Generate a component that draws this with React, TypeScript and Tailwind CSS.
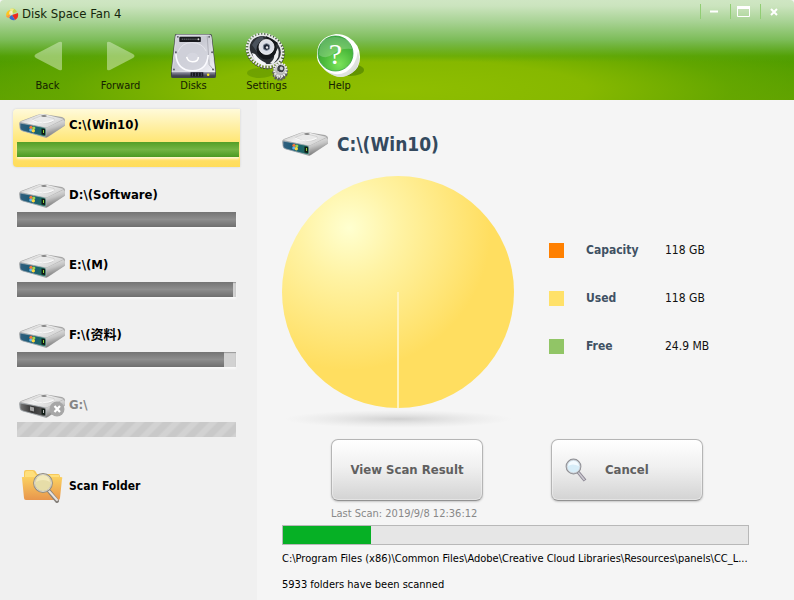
import React from "react";

type Drive = { letter: string; label: string; used: number; state: "active" | "idle" | "offline" };

const drives: Drive[] = [
  { letter: "C", label: "C:\\(Win10)", used: 100, state: "active" },
  { letter: "D", label: "D:\\(Software)", used: 100, state: "idle" },
  { letter: "E", label: "E:\\(M)", used: 98.6, state: "idle" },
  { letter: "F", label: "F:\\(资料)", used: 94.5, state: "idle" },
  { letter: "G", label: "G:\\", used: 0, state: "offline" },
];

const legend = [
  { name: "Capacity", value: "118 GB", swatch: "bg-[#ff8000]" },
  { name: "Used", value: "118 GB", swatch: "bg-[#ffe169]" },
  { name: "Free", value: "24.9 MB", swatch: "bg-[#91c566]" },
];

function Logo() {
  return (
    <svg viewBox="0 0 13 13" className="h-[13px] w-[13px]" aria-hidden="true">
      <path d="M5 6 L0 8 Q0 3 4 2Z" fill="#ffc61c" />
      <path d="M5 6 L4 1 Q9 -1 11 4Z" fill="#c5d84c" />
      <path d="M5 6 L4 1 Q6 0 8 1Z" fill="#f4e98a" />
      <path d="M6 7 L12 5 Q13 10 9 12Z" fill="#ee2a1e" />
      <path d="M6 7 L9 12 Q5 13 3 9Z" fill="#3a6bd0" />
      <path d="M5 6 L0 8 Q1 10 3 10Z" fill="#ff9a3a" />
      <circle cx="5" cy="5" r="2" fill="#fff" opacity=".55" />
    </svg>
  );
}

function ArrowIcon({ forward = false }: { forward?: boolean }) {
  return (
    <svg viewBox="0 0 28 30" className="h-[30px] w-[28px]" aria-hidden="true">
      <path
        d={forward ? "M0 2 Q0 0 3 1 L26 13 Q29 15 26 17 L3 29 Q0 30 0 28Z" : "M28 2 Q28 0 25 1 L2 13 Q-1 15 2 17 L25 29 Q28 30 28 28Z"}
        fill="#e2f2d2"
        opacity=".48"
      />
    </svg>
  );
}

function DisksIcon() {
  return (
    <svg viewBox="0 0 46 48" preserveAspectRatio="none" className="h-[46px] w-[45px]" aria-hidden="true">
      <defs>
        <linearGradient id="diskTop" x1="0" y1="0" x2="1" y2="1">
          <stop offset="0" stopColor="#d4d5dd" />
          <stop offset=".45" stopColor="#c9cad3" />
          <stop offset="1" stopColor="#f2f2f8" />
        </linearGradient>
        <linearGradient id="diskFront" x1="0" y1="0" x2="0" y2="1">
          <stop offset="0" stopColor="#8d8ea2" />
          <stop offset="1" stopColor="#3c3d4a" />
        </linearGradient>
      </defs>
      <path d="M4 2 Q4 1 6 1 H40 Q42 1 42 3 L46 40 V45 Q46 47 44 47 H2 Q0 47 0 45 V40Z" fill="#41464a" />
      <path d="M5 3 Q5 2 6 2 H39 Q41 2 41 4 L45 41 H1Z" fill="url(#diskTop)" stroke="#f7f7fa" strokeWidth=".7" />
      <path d="M37 3 L39 33 L44 39" fill="none" stroke="#a3a4ae" strokeWidth=".8" />
      <ellipse cx="21.500" cy="24.500" rx="16.500" ry="15" fill="#d0d1d9" opacity=".8" />
      <path d="M5 22 Q6 39 22 39.500 Q37 39 38 23" fill="none" stroke="#fbfbff" strokeWidth="1.600" />
      <path d="M7 20 Q11 10 21 10 Q32 10 36 19" fill="none" stroke="#e9e9ef" strokeWidth=".8" />
      <ellipse cx="22" cy="25" rx="6" ry="4.500" fill="#d5d6df" />
      <path d="M16 25 Q17 30 22 30 Q28 30 28 25" fill="none" stroke="#fff" strokeWidth="1.600" />
      <rect x="8.500" y="4" width="22" height="5.500" rx="1" fill="#191a1e" />
      <path d="M11 6.500 H26" stroke="#6b6e74" strokeWidth="1.500" strokeDasharray="1 1" />
      <circle cx="28" cy="6.500" r="1" fill="#d8d8d8" />
      <path d="M1 41 H45 V45 H1Z" fill="url(#diskFront)" />
      <rect x="20" y="41" width="13" height="4.500" fill="#191a20" />
      <path d="M22 41 V45 M25 41 V45 M28 41 V45 M31 41 V45" stroke="#46475a" />
      <circle cx="38" cy="43.500" r="1.300" fill="#ffe72a" />
      <g fill="#5c5e69">
        <circle cx="7" cy="4" r="1" /><circle cx="39" cy="4" r="1" />
        <circle cx="5" cy="20" r="1" /><circle cx="42" cy="20" r="1" />
        <circle cx="3" cy="38" r="1" /><circle cx="43" cy="38" r="1" />
      </g>
    </svg>
  );
}

function GearIcon() {
  return (
    <svg viewBox="0 0 46 50" className="h-[50px] w-[46px]" aria-hidden="true">
      <ellipse cx="16" cy="42" rx="13" ry="5" fill="#3d6f00" opacity=".3" />
      <g transform="rotate(30 21 19.500)">
        <ellipse cx="21.500" cy="20" rx="18.500" ry="15.500" fill="none" stroke="#3a3e42" strokeWidth="3.500" strokeDasharray="2.200 .8" />
        <ellipse cx="21" cy="19.500" rx="18.500" ry="15.500" fill="none" stroke="#ededed" strokeWidth="3" strokeDasharray="1.700 1.300" />
        <ellipse cx="21" cy="19" rx="17" ry="14" fill="#2b2f33" stroke="#e6e7e9" strokeWidth="1.600" />
      </g>
      <path d="M8 14 Q12 6 19 5 L20 11 Q14 13 13 21Z" fill="#4a525b" />
      <path d="M22 5 L34 12 L30 16 L24 12Z" fill="#141719" />
      <path d="M8 22 Q10 32 21 35 L22 32 Q15 29 11 23Z" fill="#f4f5f8" />
      <path d="M30 24 L34 17 Q37 26 29 33 L26 32 Q31 28 30 24Z" fill="#eeeff0" />
      <circle cx="22.500" cy="18.500" r="10" fill="#15181b" />
      <circle cx="22.500" cy="16" r="7.500" fill="#dcdfe7" stroke="#fff" strokeWidth=".8" />
      <circle cx="22.500" cy="16" r="3.300" fill="#1c2434" stroke="#7d8999" />
      <circle cx="23" cy="16.500" r="1.200" fill="#e6e8ed" />
      <g transform="rotate(20 36 40)">
        <ellipse cx="36.500" cy="41" rx="6.500" ry="7.500" fill="#666" stroke="#5a5a5a" strokeWidth="2.500" strokeDasharray="2 1" />
        <ellipse cx="36" cy="39" rx="6" ry="6.500" fill="#b5b5b5" stroke="#efefef" strokeWidth="2.200" strokeDasharray="1.500 1" />
        <circle cx="36" cy="37.500" r="4" fill="#3c3f43" stroke="#e2e2e2" strokeWidth=".8" />
        <circle cx="36.500" cy="37" r="1.800" fill="#c9ccd0" />
        <path d="M32 43 L33 47 M36 44 V48 M40 43 L39 47" stroke="#dedede" />
      </g>
    </svg>
  );
}

function HelpIcon() {
  return (
    <svg viewBox="0 0 50 46" className="h-[46px] w-[50px]" aria-hidden="true">
      <defs>
        <radialGradient id="helpFace" cx=".6" cy=".8" r=".85">
          <stop offset="0" stopColor="#7be35a" />
          <stop offset=".5" stopColor="#4dbb3c" />
          <stop offset="1" stopColor="#2c9a33" />
        </radialGradient>
        <linearGradient id="helpRim" x1="0" y1="0" x2="1" y2="1">
          <stop offset="0" stopColor="#fff" />
          <stop offset=".8" stopColor="#fff" />
          <stop offset="1" stopColor="#b5bcb5" />
        </linearGradient>
      </defs>
      <ellipse cx="35" cy="37" rx="14" ry="6" fill="#477900" opacity=".6" />
      <path d="M21 1 Q28 1 33 4 Q45 11 45 24 Q45 35 37 40 Q28 46 20 43 Q12 40 7 34 Q1 28 2 20 Q3 4 21 1Z" fill="url(#helpRim)" />
      <path d="M8 35 Q19 45 31 39 Q41 33 43 18 Q47 31 38 39 Q29 46 20 43 Q13 41 8 35Z" fill="#c9d0c9" opacity=".6" />
      <circle cx="20.500" cy="20.500" r="17.500" fill="url(#helpFace)" stroke="#38a544" strokeWidth=".8" />
      <path d="M4 22 Q4 4 20 4 Q34 4 37 16 Q25 15 18 21 Q11 27 4 22Z" fill="#fff" opacity=".22" />
      <text x="20.500" y="31" textAnchor="middle" fill="#fff" fontSize="30" fontFamily="Liberation Serif, serif">?</text>
    </svg>
  );
}

function DriveIcon({ offline = false }: { offline?: boolean }) {
  const id = offline ? "off" : "on";
  return (
    <svg viewBox="0 0 46 24" className="h-[24px] w-[46px] shrink-0" aria-hidden="true">
      <defs>
        <linearGradient id={`lid-${id}`} x1="0" y1="0" x2="1" y2=".6">
          <stop offset="0" stopColor="#bdbdbd" />
          <stop offset=".5" stopColor="#f1f1f1" />
          <stop offset="1" stopColor="#d2d2d2" />
        </linearGradient>
        <linearGradient id={`side-${id}`} x1="0" y1="0" x2=".35" y2="1">
          <stop offset="0" stopColor="#f4f4f4" />
          <stop offset=".5" stopColor="#c4c4c4" />
          <stop offset="1" stopColor="#6f6f6f" />
        </linearGradient>
        <linearGradient id={`face-${id}`} x1="0" y1="0" x2="1" y2="0">
          <stop offset="0" stopColor={offline ? "#777" : "#35607f"} />
          <stop offset=".45" stopColor={offline ? "#333" : "#155a76"} />
          <stop offset="1" stopColor={offline ? "#5c5c5c" : "#23705a"} />
        </linearGradient>
      </defs>
      <path d="M0 10 Q0 8 2 7 L18 1 Q21 0 24 0 L43 3 Q46 4 46 6 L46 11 Q46 12 44 13 L29 23 Q27 24 24 23 L3 17 Q1 16 1 15Z" fill="#a6a6a6" />
      <path d="M1 8 L19 1 Q21 0 24 0 L45 5 L29 13 Q27 14 24 13Z" fill={`url(#lid-${id})`} />
      <path d="M13 5.500 L23 1.500 L35 4.500 Q36 8 29 9 Q21 10 13 5.500Z" fill="#e9e9e9" stroke="#bcbcbc" strokeWidth=".5" />
      <path d="M13 6 Q23 11.500 35 6" fill="none" stroke="#fff" strokeWidth=".8" />
      <ellipse cx="25" cy="2" rx="2.800" ry=".8" fill="#666" />
      <path d="M27 14 L44 6 Q46 6 46 8 V11 L29 22.500 Q27 24 26 23Z" fill={`url(#side-${id})`} />
      <path d="M1 9 L25 13.500 Q27 14 27 16 V21 Q27 23 25 22.500 L4 17 Q1 16 1 14Z" fill={`url(#face-${id})`} stroke="#b4bcc2" strokeWidth=".6" />
      <path d="M22.500 14.500 L26 15 V21 L22.500 20.500Z" fill="#101b15" />
      <path d="M24.500 16 V19" stroke={offline ? "#bbb" : "#8bd43b"} />
      {offline ? (
        <path d="M11 12.500 L15 13.500 V17.500 L11 16.500Z" fill="#a4a4a4" />
      ) : (
        <g>
          <circle cx="12" cy="13.500" r="1.700" fill="#f2753a" />
          <circle cx="14.800" cy="14" r="1.600" fill="#9ad650" />
          <circle cx="11.800" cy="16" r="1.600" fill="#62b6f0" />
          <circle cx="14.300" cy="16.800" r="1.700" fill="#ffd83c" />
        </g>
      )}
      {offline && (
        <g>
          <circle cx="38" cy="15" r="7.500" fill="#a7a7a7" />
          <path d="M35.500 12 L41 18 M41 12 L35.500 18" stroke="#fff" strokeWidth="2.200" />
        </g>
      )}
    </svg>
  );
}

function FolderIcon() {
  return (
    <svg viewBox="0 0 42 34" className="h-[34px] w-[42px]" aria-hidden="true">
      <defs>
        <linearGradient id="folder" x1="0" y1="0" x2="0" y2="1">
          <stop offset="0" stopColor="#fbd060" />
          <stop offset="1" stopColor="#e8964c" />
        </linearGradient>
      </defs>
      <path d="M3 8 V3 Q3 1 5 1 H12 Q14 1 15 3 L16 5 H37 Q39 5 39 8Z" fill="#f7c95a" />
      <path d="M4 8 V4 Q4 2 6 2 H12 L15 6 H38 V10 H4Z" fill="#ffdf7b" />
      <path d="M1 9 Q0 8 2 8 H40 Q42 8 41 10 L39 29 Q39 31 37 31 H5 Q3 31 3 29Z" fill="url(#folder)" />
      <path d="M28 22 L36 32" stroke="#85807b" strokeWidth="4" strokeLinecap="round" />
      <path d="M28 22 L36 31" stroke="#e7e2df" strokeWidth="2" strokeLinecap="round" />
      <circle cx="22" cy="14" r="9" fill="#e6dda8" stroke="#908c80" strokeWidth="1.800" />
      <circle cx="22" cy="14" r="8.500" fill="none" stroke="#ece9de" strokeWidth=".8" />
      <path d="M15 13 Q22 9 29 13 Q28 6 22 6 Q16 6 15 13Z" fill="#f8efc4" opacity=".7" />
    </svg>
  );
}

function MagnifierIcon() {
  return (
    <svg viewBox="0 0 22 24" className="h-[24px] w-[22px]" aria-hidden="true">
      <path d="M13 14 L20 22.500" stroke="#8c8794" strokeWidth="3.500" />
      <path d="M13 14 L19.500 22" stroke="#cdcad2" strokeWidth="1.500" />
      <circle cx="8.500" cy="8.500" r="7.200" fill="#d7edf8" stroke="#8f9095" strokeWidth="1.400" />
      <circle cx="8.500" cy="8.500" r="6.500" fill="none" stroke="#d8d8dc" strokeWidth=".7" />
      <path d="M3 8 Q7 5 14 8 Q13 3 8.500 3 Q4 3 3 8Z" fill="#f4fbff" />
    </svg>
  );
}

function ToolButton({ label, children }: { label: string; children: React.ReactNode }) {
  return (
    <button type="button" className="flex w-[73px] flex-col items-center text-[11px] leading-[14px] text-[#142100]">
      <span className="flex h-[51px] items-center justify-center pt-1">{children}</span>
      {label}
    </button>
  );
}

function Header() {
  return (
    <header className="h-[100px] rounded-t-[4px] bg-[linear-gradient(to_bottom,#cfe6c3_0px,#cbe4be_6px,#a7d293_22px,#7cbc58_40px,rgba(88,166,15,.45)_56px,transparent_62px),radial-gradient(ellipse_60%_75px_at_50%_90px,#8fbe00_0%,#86b800_40%,rgba(106,170,0,.7)_70%,transparent_100%),linear-gradient(to_bottom,#4a9a00_60px,#5b9f00_100px)]">
      <div className="flex h-[28px] items-center pl-[6px]">
        <Logo />
        <h1 className="ml-[3px] text-[13px] leading-[16px] text-[#14260b]">Disk Space Fan 4</h1>
        <div className="ml-auto flex h-[28px] items-start pt-1 pr-[8px]">
          <button type="button" aria-label="Minimize" className="flex h-[15px] w-[30px] items-center justify-center border-l border-[#91cd74] pr-1">
            <svg viewBox="0 0 10 4" className="h-1 w-[10px]"><path d="M1 1.500 H9" stroke="#fff" strokeWidth="2" /></svg>
          </button>
          <button type="button" aria-label="Maximize" className="flex h-[15px] w-[30px] items-center justify-center border-l border-[#91cd74] pr-1">
            <svg viewBox="0 0 13 11" className="h-[11px] w-[13px]"><path d="M.5 1 V10.500 H12.500 V1" fill="none" stroke="#fff" /><path d="M0 0 H13 V3 H0Z" fill="#fff" /></svg>
          </button>
          <button type="button" aria-label="Close" className="flex h-[15px] w-[26px] items-center justify-center border-l border-[#91cd74]">
            <svg viewBox="0 0 8 8" className="h-2 w-2"><path d="M1 1 L7 7 M7 1 L1 7" stroke="#fff" strokeWidth="2" /></svg>
          </button>
        </div>
      </div>
      <nav aria-label="Toolbar" className="flex pl-[11px]">
        <ToolButton label="Back"><ArrowIcon /></ToolButton>
        <ToolButton label="Forward"><ArrowIcon forward /></ToolButton>
        <ToolButton label="Disks"><DisksIcon /></ToolButton>
        <ToolButton label="Settings"><GearIcon /></ToolButton>
        <ToolButton label="Help"><HelpIcon /></ToolButton>
      </nav>
    </header>
  );
}

function UsageBar({ drive }: { drive: Drive }) {
  if (drive.state === "offline") {
    return <span className="block h-[15px] w-full bg-[repeating-linear-gradient(135deg,#c9c9c9_0px,#c9c9c9_5px,#d2d2d2_7px,#d2d2d2_11px,#c9c9c9_13px)]" />;
  }
  return (
    <span className="block h-[15px] w-full bg-[#d2d2d2] shadow-[0_2px_2px_#ffffffb0,inset_0_1px_1px_#999]">
      <span
        className={
          drive.state === "active"
            ? "block h-full bg-[linear-gradient(to_bottom,#549f27,#73b443_50%,#4a9a21)]"
            : "block h-full bg-[linear-gradient(to_bottom,#747474,#8e8e8e_50%,#707070)]"
        }
        style={{ width: `${drive.used}%` }}
      />
    </span>
  );
}

function DriveItem({ drive }: { drive: Drive }) {
  const active = drive.state === "active";
  return (
    <li>
      <button
        type="button"
        disabled={drive.state === "offline"}
        className={
          active
            ? "flex h-[58px] w-full flex-col justify-start rounded-l-[4px] bg-[linear-gradient(to_bottom,#fffada,#ffe778_55%,#ffdc5b)] pt-[5px] pr-[1px] pl-1 text-left shadow-[0_0_2px_#c9c9c9]"
            : "flex h-[58px] w-full flex-col justify-start pt-[5px] pr-1 pl-1 text-left"
        }
      >
        <span className="mb-1 flex h-6 items-center gap-1 pl-[2px]">
          <DriveIcon offline={drive.state === "offline"} />
          <span className={drive.state === "offline" ? "pb-[3px] text-[13px] leading-[16px] font-bold text-[#858585]" : "pb-[3px] text-[13px] leading-[16px] font-bold text-black"}>
            {drive.label}
          </span>
        </span>
        <UsageBar drive={drive} />
      </button>
    </li>
  );
}

function Sidebar() {
  return (
    <aside className="w-[257px] shrink-0 bg-[#f0f0f0] pt-[9px] pr-[17px] pl-[13px]">
      <ul className="flex flex-col gap-3">
        {drives.map((d) => (
          <DriveItem key={d.letter} drive={d} />
        ))}
      </ul>
      <button type="button" className="mt-[22px] flex items-center gap-[6px] pl-2 text-[12px] leading-[16px] font-bold text-black">
        <FolderIcon />
        Scan Folder
      </button>
    </aside>
  );
}

function UsagePie() {
  return (
    <svg viewBox="0 0 232 256" className="h-[256px] w-[232px] shrink-0" role="img" aria-label="Disk usage">
      <defs>
        <radialGradient id="pie" gradientUnits="userSpaceOnUse" cx="67" cy="52" r="142">
          <stop offset="0" stopColor="#ffffd0" />
          <stop offset=".35" stopColor="#fff3a4" />
          <stop offset="1" stopColor="#ffde60" />
        </radialGradient>
        <radialGradient id="pieShadow">
          <stop offset="0" stopColor="#aaa" stopOpacity=".5" />
          <stop offset=".5" stopColor="#bbb" stopOpacity=".25" />
          <stop offset="1" stopColor="#ccc" stopOpacity="0" />
        </radialGradient>
      </defs>
      <ellipse cx="116" cy="243" rx="114" ry="9" fill="url(#pieShadow)" />
      <circle cx="116" cy="116" r="116" fill="url(#pie)" />
      <path d="M116 116 V232" stroke="#fff3bd" strokeWidth="2" />
    </svg>
  );
}

const actionButton =
  "flex h-[62px] w-[152px] items-center rounded-[7px] border border-[#b5b5b5] border-b-[#929292] bg-[linear-gradient(to_bottom,#ffffff,#f0f0f0_45%,#d3d3d3)] text-[13px] leading-[18px] font-bold text-[#606060] shadow-[0_1px_2px_#00000030,inset_0_0_0_1px_#ffffff60]";

function Details() {
  return (
    <main className="min-w-0 flex-1 bg-[#f5f5f5] pt-8 pr-[45px] pb-2 pl-[25px]">
      <div className="flex h-6 items-center gap-[9px]">
        <DriveIcon />
        <h2 className="text-[19px] leading-[24px] font-bold text-[#34495e]">C:\(Win10)</h2>
      </div>
      <div className="mt-5 flex">
        <UsagePie />
        <table className="mt-[50px] ml-[35px] h-[144px] border-collapse text-left text-[12px] leading-[16px]">
          <tbody>
            {legend.map((row) => (
              <tr key={row.name} className="h-[48px]">
                <td className="w-[37px] p-0"><span className={`block h-[15px] w-[15px] ${row.swatch}`} /></td>
                <th scope="row" className="w-[79px] p-0 font-bold text-[#3f5163]">{row.name}</th>
                <td className="p-0 text-[#111]">{row.value}</td>
              </tr>
            ))}
          </tbody>
        </table>
      </div>
      <div className="mt-[7px] flex gap-[68px] pl-[49px]">
        <div>
          <button type="button" className={`${actionButton} justify-center`}>View Scan Result</button>
          <p className="mt-[6px] text-[11px] leading-[14px] text-[#888]">Last Scan: 2019/9/8 12:36:12</p>
        </div>
        <button type="button" className={`${actionButton} gap-[18px] pl-[13px]`}>
          <MagnifierIcon />
          Cancel
        </button>
      </div>
      <div role="progressbar" aria-label="Scan progress" aria-valuenow={19} aria-valuemin={0} aria-valuemax={100} className="mt-1 h-[20px] border border-[#b8b8b8] bg-[#e6e6e6]">
        <div className="h-full w-[19%] bg-[#06b025]" />
      </div>
      <p className="mt-[7px] truncate text-[11px] leading-[14px] text-black">
        C:\Program Files (x86)\Common Files\Adobe\Creative Cloud Libraries\Resources\panels\CC_L...
      </p>
      <p className="mt-3 text-[11px] leading-[14px] text-black">5933 folders have been scanned</p>
    </main>
  );
}

export default function App() {
  return (
    <div className="flex min-h-screen flex-col bg-[#f5f5f5] font-['DejaVu_Sans_Condensed','Noto_Sans_CJK_SC',sans-serif]">
      <Header />
      <div className="flex flex-1">
        <Sidebar />
        <Details />
      </div>
    </div>
  );
}
